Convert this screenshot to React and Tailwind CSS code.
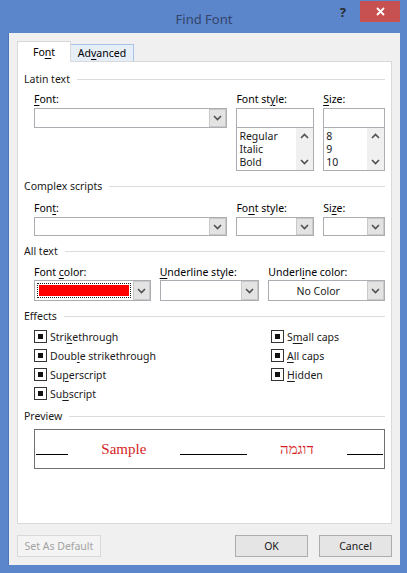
import React from "react";

function Chevron({ up = false }) {
  return (
    <svg width="9" height="6" viewBox="0 0 9 6" className="block">
      <path d={up ? "M1 5 L4.5 1.5 L8 5" : "M1 1 L4.5 4.5 L8 1"} fill="none" stroke="#505050" strokeWidth="1.6" />
    </svg>
  );
}

function Combo({ cls, children }) {
  return (
    <div className={`${cls} flex border border-[#abadb3] bg-white`}>
      <div className="flex-1 flex items-center justify-center text-[#1a1a1a]">{children}</div>
      <div className="w-[17px] bg-[#e3e3e3] border border-[#c9c9c9] flex items-center justify-center">
        <Chevron />
      </div>
    </div>
  );
}

function Section({ label }) {
  return (
    <div className="h-[16px] flex items-center">
      <span className="text-[#1a1a1a]">{label}</span>
      <div className="flex-1 h-px bg-[#dcdcdc] ml-[7px]" />
    </div>
  );
}

function ListCol({ cls, items }) {
  return (
    <div className={`${cls} flex flex-col`}>
      <div className="h-[20px] border border-[#abadb3] bg-white" />
      <div className="h-[43px] border border-t-0 border-[#abadb3] bg-white flex">
        <div className="flex-1 pl-[2px] pt-[2px] text-[#1a1a1a] leading-[13px]">
          {items.map((t) => (
            <div key={t} className="h-[13px]">{t}</div>
          ))}
        </div>
        <div className="w-[17px] bg-[#f0f0f0] flex flex-col items-center justify-between py-[5px]">
          <Chevron up />
          <Chevron />
        </div>
      </div>
    </div>
  );
}

function Check({ children }) {
  return (
    <div className="h-[19px] flex items-center">
      <div className="w-[13px] h-[13px] border border-[#333] bg-white flex items-center justify-center">
        <div className="w-[5px] h-[5px] bg-[#111]" />
      </div>
      <span className="ml-[3px] text-[#1a1a1a]">{children}</span>
    </div>
  );
}

const U = ({ children }) => <u className="underline underline-offset-2">{children}</u>;

export default function App() {
  return (
    <div className="w-[407px] h-[573px] bg-[#5b86cc] flex flex-col pl-[8px] pr-[7px] pb-[8px] font-['Noto_Sans',sans-serif] text-[10.5px] leading-[16px] overflow-hidden">
      {/* title bar */}
      <div className="relative h-[33px] flex items-center justify-center pt-[5px]">
        <span className="text-[13px] text-[#34446a]">Find Font</span>
        <span className="absolute right-[54px] top-[4px] text-[13px] font-bold text-[#2a2a2a]">?</span>
        <div className="absolute right-0 top-[1px] w-[40px] h-[21px] bg-[#c75050] flex items-center justify-center">
          <svg width="9" height="9" viewBox="0 0 9 9">
            <path d="M1 1 L8 8 M8 1 L1 8" stroke="#fff" strokeWidth="1.8" />
          </svg>
        </div>
      </div>

      {/* content */}
      <div className="flex-1 bg-[#f0f0f0] border-l border-[#4d76b8] px-[8px] pt-[8px] pb-[8px] flex flex-col">
        <div className="h-[20px] flex items-end">
          <div className="w-[54px] h-[21px] -mb-px bg-white border border-b-0 border-[#d9d9d9] flex items-center justify-center relative z-10">
            Fo<U>n</U>t
          </div>
          <div className="w-[63px] h-[17px] bg-[#e6eef8] border border-b-0 border-l-0 border-[#a9c4e6] flex items-center justify-center">
            Ad<U>v</U>anced
          </div>
        </div>

        <div className="h-[463px] bg-white border border-[#d9d9d9] px-[6px] pt-[9px]">
          <Section label="Latin text" />
          <div className="flex gap-[9px] pl-[10px] mt-[4px]">
            <div className="w-[194px] flex flex-col">
              <div className="h-[16px]"><U>F</U>ont:</div>
              <Combo cls="h-[20px] mt-[1px]" />
            </div>
            <div className="w-[78px] flex flex-col">
              <div className="h-[16px]">Font st<U>y</U>le:</div>
              <ListCol cls="mt-[1px]" items={["Regular", "Italic", "Bold"]} />
            </div>
            <div className="w-[62px] flex flex-col">
              <div className="h-[16px]"><U>S</U>ize:</div>
              <ListCol cls="mt-[1px]" items={["8", "9", "10"]} />
            </div>
          </div>

          <div className="mt-[7px]">
            <Section label="Complex scripts" />
          </div>
          <div className="flex gap-[9px] pl-[10px] mt-[6px]">
            <div className="w-[194px] flex flex-col">
              <div className="h-[16px]">Fon<U>t</U>:</div>
              <Combo cls="h-[19px] mt-[1px]" />
            </div>
            <div className="w-[78px] flex flex-col">
              <div className="h-[16px]">Fo<U>n</U>t style:</div>
              <Combo cls="h-[19px] mt-[1px]" />
            </div>
            <div className="w-[62px] flex flex-col">
              <div className="h-[16px]">Si<U>z</U>e:</div>
              <Combo cls="h-[19px] mt-[1px]" />
            </div>
          </div>

          <div className="mt-[7px]">
            <Section label="All text" />
          </div>
          <div className="flex gap-[9px] pl-[10px] mt-[5px]">
            <div className="w-[117px] flex flex-col">
              <div className="h-[16px]">Font <U>c</U>olor:</div>
              <div className="h-[21px] flex border border-[#abadb3] bg-white">
                <div className="flex-1 p-[2px]">
                  <div className="h-full border border-dotted border-[#222] p-[1px]">
                    <div className="h-full bg-[#ff0000]" />
                  </div>
                </div>
                <div className="w-[17px] bg-[#e3e3e3] border border-[#c9c9c9] flex items-center justify-center">
                  <Chevron />
                </div>
              </div>
            </div>
            <div className="w-[100px] flex flex-col">
              <div className="h-[16px]"><U>U</U>nderline style:</div>
              <Combo cls="h-[21px]" />
            </div>
            <div className="w-[117px] flex flex-col">
              <div className="h-[16px]">Underl<U>i</U>ne color:</div>
              <Combo cls="h-[21px]">No Color</Combo>
            </div>
          </div>

          <div className="mt-[7px]">
            <Section label="Effects" />
          </div>
          <div className="flex pl-[10px] mt-[3px]">
            <div className="w-[237px] flex flex-col">
              <Check>Stri<U>k</U>ethrough</Check>
              <Check>Doub<U>l</U>e strikethrough</Check>
              <Check>Su<U>p</U>erscript</Check>
              <Check>Su<U>b</U>script</Check>
            </div>
            <div className="flex flex-col">
              <Check>S<U>m</U>all caps</Check>
              <Check><U>A</U>ll caps</Check>
              <Check><U>H</U>idden</Check>
            </div>
          </div>

          <div className="mt-[5px]">
            <Section label="Preview" />
          </div>
          <div className="ml-[10px] mt-[5px] h-[40px] border border-[#707070] bg-white flex items-end justify-between pl-[1px] pr-px pb-[13px] font-['Liberation_Serif',serif] text-[15px] leading-[15px] text-[#d41d24]">
            <div className="w-[32px] h-px bg-black" />
            <span className="-mb-[2px]">Sample</span>
            <div className="w-[67px] h-px bg-black" />
            <span className="-mb-[2px]">דוגמה</span>
            <div className="w-[36px] h-px bg-black" />
          </div>
        </div>

        <div className="flex mt-[11px]">
          <div className="w-[84px] h-[22px] border border-[#d9d9d9] bg-[#f4f4f4] text-[#a3a3a3] flex items-center justify-center">
            Set As Default
          </div>
          <div className="flex-1" />
          <div className="w-[73px] h-[22px] border border-[#adadad] bg-[#e5e5e5] flex items-center justify-center text-[#1a1a1a]">
            OK
          </div>
          <div className="w-[73px] h-[22px] ml-[11px] border border-[#adadad] bg-[#e5e5e5] flex items-center justify-center text-[#1a1a1a]">
            Cancel
          </div>
        </div>
      </div>
    </div>
  );
}
